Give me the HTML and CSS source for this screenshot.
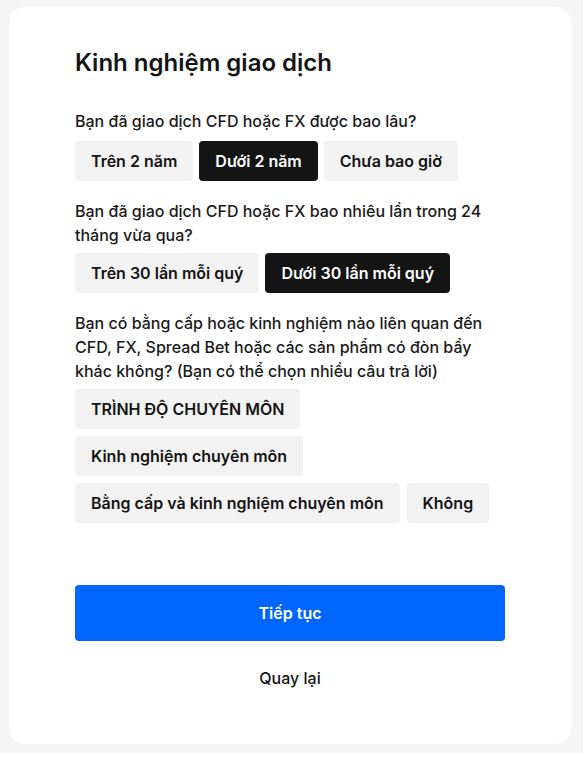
FILE: index.html
```html
<!DOCTYPE html>
<html lang="vi">
<head>
<meta charset="utf-8">
<title>Kinh nghiệm giao dịch</title>
<link rel="stylesheet" href="styles.css">
</head>
<body>
<div class="page">
  <div class="card">
    <h1 class="title">Kinh nghiệm giao dịch</h1>

    <section class="section first">
      <p class="question">Bạn đã giao dịch CFD hoặc FX được bao lâu?</p>
      <div class="options">
        <button class="opt">Trên 2 năm</button>
        <button class="opt selected">Dưới 2 năm</button>
        <button class="opt">Chưa bao giờ</button>
      </div>
    </section>

    <section class="section">
      <p class="question">Bạn đã giao dịch CFD hoặc FX bao nhiêu lần trong 24 tháng vừa qua?</p>
      <div class="options">
        <button class="opt">Trên 30 lần mỗi quý</button>
        <button class="opt selected">Dưới 30 lần mỗi quý</button>
      </div>
    </section>

    <section class="section">
      <p class="question">Bạn có bằng cấp hoặc kinh nghiệm nào liên quan đến CFD, FX, Spread Bet hoặc các sản phẩm có đòn bẩy khác không? (Bạn có thể chọn nhiều câu trả lời)</p>
      <div class="options stack">
        <div class="opt-row"><button class="opt">TRÌNH ĐỘ CHUYÊN MÔN</button></div>
        <div class="opt-row"><button class="opt">Kinh nghiệm chuyên môn</button></div>
        <div class="opt-row">
          <button class="opt">Bằng cấp và kinh nghiệm chuyên môn</button>
          <button class="opt">Không</button>
        </div>
      </div>
    </section>

    <button class="primary">Tiếp tục</button>
    <button class="back">Quay lại</button>
  </div>
</div>
</body>
</html>
```

FILE: styles.css
```css
* { box-sizing: border-box; }
html, body {
  margin: 0;
  padding: 0;
  background: #ffffff;
}
body {
  font-family: "Inter", "Noto Sans", sans-serif;
  color: #141414;
}
.page {
  width: 583px;
  height: 753px;
  background: #f5f5f5;
  padding: 7px 12px 9px 9px;
}
.card {
  background: #ffffff;
  border-radius: 16px;
  height: 737px;
  padding: 41px 66px 0 66px;
  display: flex;
  flex-direction: column;
}
.title {
  margin: 0;
  font-size: 24px;
  line-height: 30px;
  font-weight: 600;
  letter-spacing: 0;
  color: #141414;
}
.section {
  margin-top: 18px;
}
.section.first {
  margin-top: 31px;
}
.question {
  margin: 0 0 6px 0;
  font-size: 16px;
  line-height: 24px;
  font-weight: 500;
  color: #1a1a1a;
}
.section.first .question { margin-bottom: 8px; }
.options {
  display: flex;
  flex-wrap: wrap;
  gap: 7px 6px;
}
.options.stack {
  flex-direction: column;
  gap: 7px;
}
.opt-row {
  display: flex;
  gap: 7px;
}
.opt {
  font-family: inherit;
  height: 40px;
  padding: 0 16px;
  border: none;
  border-radius: 4px;
  background: #f2f2f2;
  color: #141414;
  font-size: 16px;
  font-weight: 600;
  cursor: pointer;
}
.opt.selected {
  background: #141414;
  color: #ffffff;
}
.primary {
  font-family: inherit;
  margin-top: 62px;
  height: 56px;
  width: 100%;
  border: none;
  border-radius: 4px;
  background: #0066ff;
  color: #ffffff;
  font-size: 16px;
  font-weight: 600;
}
.back {
  font-family: inherit;
  margin-top: 25px;
  height: 24px;
  border: none;
  background: transparent;
  color: #141414;
  font-size: 16px;
  font-weight: 500;
}
```
